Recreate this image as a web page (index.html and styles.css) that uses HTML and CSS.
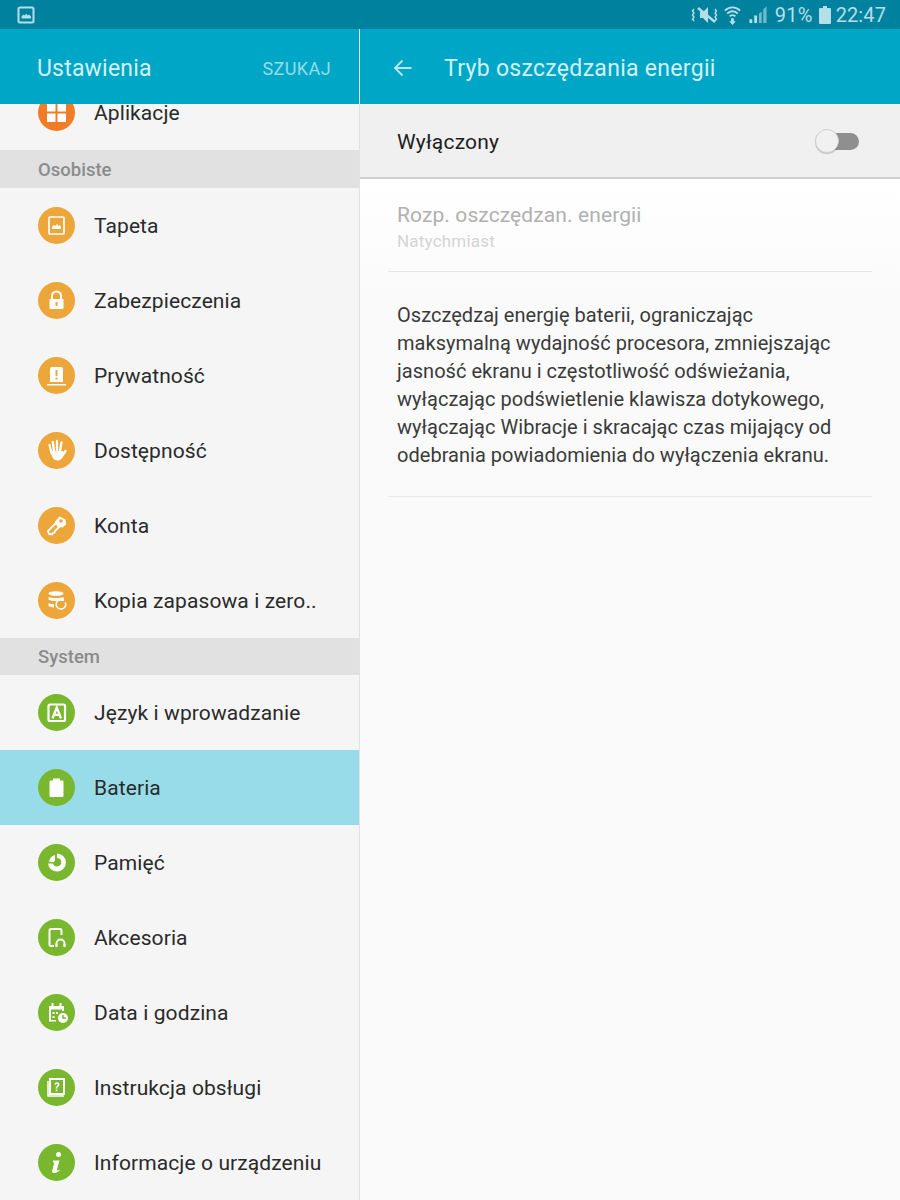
FILE: index.html
```html
<!DOCTYPE html>
<html lang="pl">
<head>
<meta charset="utf-8">
<title>Tryb oszczędzania energii</title>
<link rel="stylesheet" href="styles.css">
</head>
<body>
<div class="status">
  <svg class="st-pic" viewBox="0 0 18 18"><rect x="1.5" y="1.5" width="15" height="15" rx="1.5" fill="none" stroke="#b5dfe8" stroke-width="2"/><path d="M4.5 12.5V10.5l2-2 1.5 1 1-2 1.5 2 1.500-1 2 2v2z" fill="#b5dfe8"/></svg>
  <div class="st-right">
    <svg class="st-mute" viewBox="0 0 28 20"><path d="M9 7h3l5-5v16l-5-5H9z" fill="#b5dfe8"/><path d="M7 3l17 14" stroke="#b5dfe8" stroke-width="2.400"/><path d="M3 4l-1.500 2 1.500 2-1.500 2 1.500 2-1.500 2 1.500 2M24 4l1.500 2-1.500 2 1.500 2-1.500 2 1.500 2-1.500 2" fill="none" stroke="#b5dfe8" stroke-width="1.400"/></svg>
    <svg class="st-wifi" viewBox="0 0 20 22"><path d="M2 7a11 11 0 0 1 16 0M4.500 10a7.500 7.500 0 0 1 11 0M7 13a4 4 0 0 1 6 0" fill="none" stroke="#b5dfe8" stroke-width="2"/><path d="M8.500 15h3v3h2l-3.500 4-3.500-4h2z" fill="#b5dfe8"/></svg>
    <svg class="st-signal" viewBox="0 0 20 20"><path d="M1 19h3v-4H1z" fill="#b5dfe8"/><path d="M6 19h3V11H6z" fill="#b5dfe8"/><path d="M11 19h3V7l-3 2z" fill="#6fb9cb"/><path d="M15.500 19H19V1l-3.500 4z" fill="#6fb9cb"/></svg>
    <span class="st-pct">91%</span>
    <svg class="st-batt" viewBox="0 0 12 18"><path d="M4 0h4v2h3a1 1 0 0 1 1 1v14a1 1 0 0 1-1 1H1a1 1 0 0 1-1-1V3a1 1 0 0 1 1-1h3z" fill="#b5dfe8"/></svg>
    <span class="st-time">22:47</span>
  </div>
</div>
<div class="panes">
  <aside class="left">
    <header class="bar bar-left"><span class="bar-title">Ustawienia</span><span class="search">SZUKAJ</span></header>
    <div class="scroll">
      <div class="scroll-inner">
        <div class="row"><span class="ic orange"><svg viewBox="0 0 37 37"><path d="M9 9h8.500v8.500H9zM19.500 9H28v8.500h-8.500zM9 19.500h8.500V28H9zM19.500 19.500H28V28h-8.500z" fill="#fff"/></svg></span><span class="lbl">Aplikacje</span></div>
        <div class="sect sect-first">Osobiste</div>
        <div class="row"><span class="ic amber"><svg viewBox="0 0 37 37"><rect x="11" y="10" width="15" height="17" rx="1" fill="none" stroke="#fff" stroke-width="1.700"/><path d="M14 22v-2l2-2 1.500 1 1.500-2 1.500 2 1.500-1 1 2v2z" fill="#fff"/></svg></span><span class="lbl">Tapeta</span></div>
        <div class="row"><span class="ic amber"><svg viewBox="0 0 37 37"><path d="M14 17v-3a4.500 4.500 0 0 1 9 0v3" fill="none" stroke="#fff" stroke-width="2"/><path d="M11.500 17h14v9a1 1 0 0 1-1 1h-12a1 1 0 0 1-1-1z" fill="#fff"/><path d="M17.500 20h2v4h-2z" fill="#eda63a"/></svg></span><span class="lbl">Zabezpieczenia</span></div>
        <div class="row"><span class="ic amber"><svg viewBox="0 0 37 37"><path d="M12 25V12a2 2 0 0 1 2-2h9a2 2 0 0 1 2 2v13z" fill="#fff"/><path d="M9 27h19v1.500H9z" fill="#fff"/><path d="M17.500 13h2v6h-2zM17.500 20.500h2v2h-2z" fill="#eda63a"/></svg></span><span class="lbl">Prywatność</span></div>
        <div class="row"><span class="ic amber"><svg viewBox="0 0 37 37"><path d="M13.500 21L11.500 13M16 19L14.800 10M19 18.500V9M22 19l1.500-8.500" fill="none" stroke="#fff" stroke-width="2.300" stroke-linecap="round"/><path d="M24 24l3.500-5" fill="none" stroke="#fff" stroke-width="2.500" stroke-linecap="round"/><path d="M12.500 19h12.500v5c-1 3-3 4.500-5.500 4.500-3.500 0-6-3-7-9.500z" fill="#fff"/></svg></span><span class="lbl">Dostępność</span></div>
        <div class="row"><span class="ic amber"><svg viewBox="0 0 37 37"><path d="M19 15L10 24l1 3 3 .5 1-1.500 1.500-.5.500-1.500 5-5" fill="none" stroke="#fff" stroke-width="1.800"/><path d="M21.500 9.500l6 3 .5 5-3.500 3-5.500-1-2-5z" fill="#fff"/><circle cx="23" cy="14" r="1.800" fill="#eda63a"/></svg></span><span class="lbl">Konta</span></div>
        <div class="row"><span class="ic amber"><svg viewBox="0 0 37 37"><ellipse cx="18" cy="11.500" rx="7.500" ry="2.300" fill="#fff"/><path d="M10.500 15c2 1.300 13 1.300 15 0v2.500c-1.500 1-5 1.500-7.500 1.500-3 0-6-.5-7.500-1.500zM10.500 21c1.500 1 3.500 1.300 5.500 1.500v3c-2.500-.2-5.500-1-5.500-2z" fill="#fff"/><path d="M27.300 20.300a4.800 4.800 0 1 1-2-2.200" fill="none" stroke="#fff" stroke-width="1.500"/><path d="M26 15.500v3.500h-3.500z" fill="#fff"/></svg></span><span class="lbl">Kopia zapasowa i zero..</span></div>
        <div class="sect">System</div>
        <div class="row"><span class="ic green"><svg viewBox="0 0 37 37"><rect x="10.500" y="10.500" width="16.500" height="16.500" rx="1.500" fill="none" stroke="#fff" stroke-width="2.200"/><path d="M14.500 24.500l4.250-11 4.250 11M16 20.800h5.500" fill="none" stroke="#fff" stroke-width="2.300"/></svg></span><span class="lbl">Język i wprowadzanie</span></div>
        <div class="row active"><span class="ic green"><svg viewBox="0 0 37 37"><path d="M15 9.500h7v2h2.500a1 1 0 0 1 1 1V27a1 1 0 0 1-1 1h-12a1 1 0 0 1-1-1V12.500a1 1 0 0 1 1-1H15z" fill="#fff"/></svg></span><span class="lbl">Bateria</span></div>
        <div class="row"><span class="ic green"><svg viewBox="0 0 37 37"><path d="M19 9.500a9 9 0 1 1-9 10h5a4.200 4.200 0 1 0 4-5.500z" fill="#fff"/><path d="M11 18a8 8 0 0 1 6-7v5.500a3 3 0 0 0-1 1.500z" fill="#fff"/></svg></span><span class="lbl">Pamięć</span></div>
        <div class="row"><span class="ic green"><svg viewBox="0 0 37 37"><path d="M16 27h-3a1.500 1.500 0 0 1-1.500-1.500v-14A1.500 1.500 0 0 1 13 10h9a1.500 1.500 0 0 1 1.500 1.500V16" fill="none" stroke="#fff" stroke-width="2"/><path d="M18.500 27v-2.500a4 4 0 0 1 8 0V27" fill="none" stroke="#fff" stroke-width="1.800"/><path d="M17.500 24.500h2v3.500h-2zM25.500 24.500h2v3.500h-2z" fill="#fff"/></svg></span><span class="lbl">Akcesoria</span></div>
        <div class="row"><span class="ic green"><svg viewBox="0 0 37 37"><path d="M11 12h15v5h-2v-1.500H13V26h5v1.500h-7z" fill="#fff"/><path d="M13.500 9h2v4h-2zM21.500 9h2v4h-2zM14.500 18h2v2h-2zM18 18h2v2h-2zM14.500 22h2v2h-2z" fill="#fff"/><circle cx="25" cy="24" r="5" fill="#fff"/><path d="M25 21v3h3" fill="none" stroke="#78b72e" stroke-width="1.500"/></svg></span><span class="lbl">Data i godzina</span></div>
        <div class="row"><span class="ic green"><svg viewBox="0 0 37 37"><path d="M12 10h14v15H12z" fill="none" stroke="#fff" stroke-width="2"/><path d="M10 12v15h16" fill="none" stroke="#fff" stroke-width="1.500"/><path d="M16.500 15.500c0-3 5-3 5 0 0 2-2.200 2-2.200 4h-1.600c0-2.600 2.200-2.800 2.200-4 0-1-1.800-1-1.900.3zM17.700 20.500h1.600v1.800h-1.600z" fill="#fff"/></svg></span><span class="lbl">Instrukcja obsługi</span></div>
        <div class="row"><span class="ic green"><svg viewBox="0 0 37 37"><circle cx="20.500" cy="10.500" r="2.500" fill="#fff"/><path d="M15 16.500h6.500L18.800 26c-.2.800.6 1 2.700-.5l.4.700C19.500 28.300 17.500 29 15.800 29c-1.500 0-2-1-1.600-2.300l2.200-8.200H15z" fill="#fff"/></svg></span><span class="lbl">Informacje o urządzeniu</span></div>
      </div>
    </div>
  </aside>
  <main class="right">
    <header class="bar bar-right">
      <svg class="back" viewBox="0 0 20 20"><path d="M19 10H3M10 2.500L2.500 10l7.500 7.500" fill="none" stroke="#b9e6ef" stroke-width="1.800"/></svg>
      <span class="bar-title">Tryb oszczędzania energii</span>
    </header>
    <div class="toggle-row">
      <span class="toggle-lbl">Wyłączony</span>
      <span class="switch"><span class="track"></span><span class="thumb"></span></span>
    </div>
    <div class="content">
      <div class="setting">
        <div class="set-title">Rozp. oszczędzan. energii</div>
        <div class="set-sub">Natychmiast</div>
      </div>
      <p class="desc">Oszczędzaj energię baterii, ograniczając<br>maksymalną wydajność procesora, zmniejszając<br>jasność ekranu i częstotliwość odświeżania,<br>wyłączając podświetlenie klawisza dotykowego,<br>wyłączając Wibracje i skracając czas mijający od<br>odebrania powiadomienia do wyłączenia ekranu.</p>
    </div>
  </main>
</div>
</body>
</html>
```
FILE: styles.css
```css
* { box-sizing: border-box; }
html, body { margin: 0; height: 1200px; overflow: hidden; }
body { font-family: Roboto, "Noto Sans", sans-serif; background: #fafafa; display: flex; flex-direction: column; }

.status { height: 29px; flex: none; background: #00829f; display: flex; align-items: center; justify-content: space-between; padding: 0 14px 0 17px; }
.st-pic { width: 18px; height: 18px; }
.st-right { display: flex; align-items: center; color: #b5dfe8; font-size: 20px; }
.st-mute { width: 28px; height: 20px; margin-right: 4px; }
.st-wifi { width: 19px; height: 21px; margin-right: 6px; }
.st-signal { width: 20px; height: 19px; margin-right: 7px; }
.st-pct { margin-right: 6px; letter-spacing: 0.3px; }
.st-batt { width: 12px; height: 18px; margin-right: 5px; }
.st-time { letter-spacing: 0.1px; }

.panes { flex: 1; display: flex; min-height: 0; }
.left { width: 360px; flex: none; display: flex; flex-direction: column; background: #f5f5f5; border-right: 1px solid #e2e2e2; }
.right { flex: 1; display: flex; flex-direction: column; background: #fafafa; }

.bar { height: 75px; flex: none; background: #00a6c6; display: flex; align-items: center; position: relative; z-index: 1; }
.bar-left { justify-content: space-between; padding: 3px 28px 0 37px; }
.bar-right { padding: 3px 0 0 32px; }
.bar-title { color: #d3f1f6; font-size: 23px; letter-spacing: 0.2px; }
.bar-right .bar-title { letter-spacing: 0.3px; }
.search { color: #93dde9; font-size: 18px; letter-spacing: 0.4px; }
.back { width: 21px; height: 20px; margin-right: 31px; }

.scroll { flex: 1; overflow: hidden; }
.scroll-inner { margin-top: -29px; }
.row { height: 75px; display: flex; align-items: center; padding-left: 38px; }
.row.active { background: #98dce9; }
.sect { height: 37px; padding: 1px 0 0 38px; background: #e1e1e1; color: #8b8b8b; font-size: 18.500px; font-weight: 500; display: flex; align-items: center; }
.sect-first { height: 38px; }
.lbl { margin-left: 19px; font-size: 21px; letter-spacing: 0.1px; color: #2a2a2a; white-space: nowrap; }
.ic { width: 37px; height: 37px; border-radius: 50%; flex: none; display: block; }
.ic svg { display: block; width: 37px; height: 37px; }
.orange { background: #f07d26; }
.amber { background: #eda63a; }
.green { background: #78b72e; }

.toggle-row { height: 75px; flex: none; background: #f0f0f0; border-bottom: 2px solid #cfcfcf; display: flex; align-items: center; justify-content: space-between; padding: 1px 41px 0 37px; }
.toggle-lbl { font-size: 21px; letter-spacing: 0.2px; line-height: 26px; padding-top: 1px; color: #1e1e1e; }
.switch { position: relative; width: 44px; height: 24px; display: block; }
.track { position: absolute; left: 5px; right: 0; top: 4px; height: 17px; background: #8f8f8f; border-radius: 9px; }
.thumb { position: absolute; left: 0; top: 0; width: 24px; height: 24px; border-radius: 50%; background: #f1f1f1; border: 1px solid #d0d0d0; box-shadow: 0 1px 1px rgba(0,0,0,.2); }

.content { flex: 1; padding: 0 28px; background: linear-gradient(#fff, #fafafa 120px); }
.setting { height: 93px; padding: 22px 0 0 9px; border-bottom: 1px solid #e6e6e6; }
.set-title { font-size: 21px; letter-spacing: 0.1px; line-height: 28px; color: #b0b0b0; }
.set-sub { font-size: 17px; letter-spacing: 0.2px; line-height: 24px; color: #d4d4d4; }
.desc { margin: 0; padding: 29px 0 27px 9px; font-size: 20px; letter-spacing: 0.03px; line-height: 28px; color: #3a3a3a; border-bottom: 1px solid #e9e9e9; white-space: nowrap; }
```
